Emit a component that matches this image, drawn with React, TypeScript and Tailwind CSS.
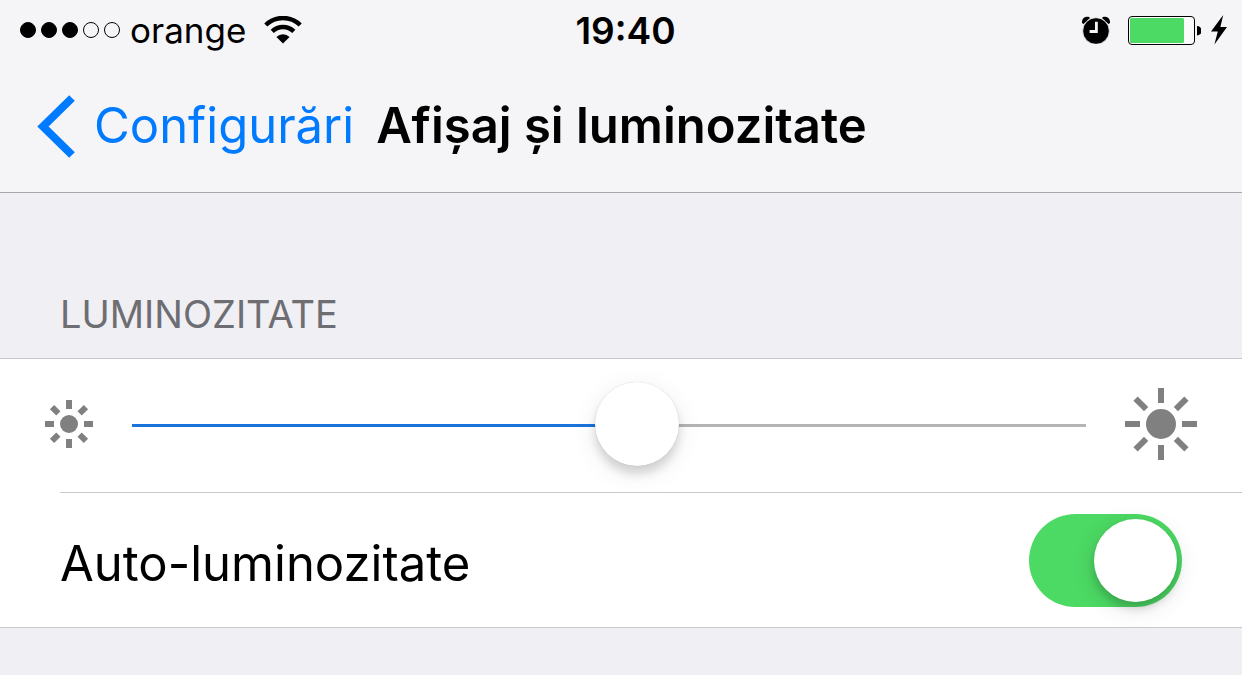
import { useState } from "react";

const rays = [0, 45, 90, 135, 180, 225, 270, 315];

function SignalDots({ strength }: { strength: number }) {
  return (
    <div className="flex gap-[5px]">
      {[0, 1, 2, 3, 4].map((dot) => (
        <span
          key={dot}
          className={
            dot < strength
              ? "size-4 rounded-full border border-black bg-black"
              : "size-4 rounded-full border border-black"
          }
        />
      ))}
    </div>
  );
}

function WifiIcon() {
  return (
    <svg width="38" height="28" viewBox="0 0 38 28" aria-hidden="true">
      <path d="M1.8 9A24.5 24.5 0 0 1 36.2 9" fill="none" stroke="#000" strokeWidth="4.4" />
      <path d="M8.2 15.4A15.4 15.4 0 0 1 29.8 15.4" fill="none" stroke="#000" strokeWidth="4.4" />
      <path d="M19 27.6l-6.6-6.6a9.4 9.4 0 0 1 13.2 0z" />
    </svg>
  );
}

function AlarmIcon() {
  return (
    <svg width="28" height="28" viewBox="0 0 28 28" aria-hidden="true">
      <path d="M0 7C-.4 2.6 2.4 0 7 .9L8 2 1.4 8zM28 7C28.4 2.6 25.6 0 21 .9L20 2l6.6 6z" />
      <circle cx="14" cy="15" r="13.3" stroke="#f5f5f7" strokeWidth=".8" />
      <path d="M14.4 5.7v9.8H7.6" fill="none" stroke="#f5f5f7" strokeWidth="2.8" />
    </svg>
  );
}

function BatteryIcon() {
  return (
    <svg width="73" height="29" viewBox="0 0 73 29" aria-hidden="true">
      <rect x=".5" y=".5" width="66" height="28" rx="3.5" fill="#fbfbfc" stroke="#000" />
      <rect x="2" y="2" width="54" height="25" rx="1.5" fill="#4cd964" />
      <path d="M69 10a4.5 4.5 0 0 1 0 9.5z" />
    </svg>
  );
}

function BoltIcon() {
  return (
    <svg width="16" height="30" viewBox="0 0 16 30" aria-hidden="true">
      <path d="M12.2 0L0 16.4h6.8L3.4 29.6 16 12H9.4z" />
    </svg>
  );
}

function SunIcon({ size, radius, ray }: { size: number; radius: number; ray: number }) {
  const c = size / 2;
  return (
    <svg
      width={size}
      height={size}
      viewBox={`0 0 ${size} ${size}`}
      fill="#808080"
      className="shrink-0"
      aria-hidden="true"
    >
      <circle cx={c} cy={c} r={radius} />
      {rays.map((angle) => (
        <rect
          key={angle}
          x={c - 3}
          y={0}
          width={6}
          height={ray}
          transform={`rotate(${angle} ${c} ${c})`}
        />
      ))}
    </svg>
  );
}

export default function App() {
  const [brightness, setBrightness] = useState(532);
  const [auto, setAuto] = useState(true);

  return (
    <div className="min-h-screen bg-[#efeff4] font-['Inter','Liberation_Sans',sans-serif] text-black">
      <header className="border-b border-[#a7a7ab] bg-[#f5f5f7]">
        <div className="grid h-15 grid-cols-[1fr_auto_1fr] items-center pr-[15px] pl-5">
          <div className="flex items-center">
            <SignalDots strength={3} />
            <span className="ml-2.5 text-[35px] leading-10">orange</span>
            <span className="ml-4.5">
              <WifiIcon />
            </span>
          </div>
          <time className="pt-0.5 pl-1 text-[37px] leading-10 font-semibold">19:40</time>
          <div className="flex items-center justify-end">
            <AlarmIcon />
            <span className="ml-4.5">
              <BatteryIcon />
            </span>
            <span className="ml-2.5">
              <BoltIcon />
            </span>
          </div>
        </div>
        <nav className="flex h-33 items-center gap-[22px] pl-9">
          <button type="button" className="flex items-center gap-4.5 text-[49px] leading-[62px] text-[#007aff]">
            <svg width="40" height="64" viewBox="0 0 40 64" aria-hidden="true">
              <path d="M36 4L7 32.5 36 61" fill="none" stroke="#007aff" strokeWidth="8" />
            </svg>
            Configurări
          </button>
          <h1 className="text-[49px] leading-[62px] font-semibold whitespace-nowrap">
            Afișaj și luminozitate
          </h1>
        </nav>
      </header>

      <main>
        <h2 className="px-15 pt-[99px] pb-[21px] text-[38px] leading-[45px] text-[#6d6d72]">
          LUMINOZITATE
        </h2>
        <section className="border-y border-[#c8c7cc] bg-white">
          <div className="flex h-[133px] items-center px-[45px] pb-1">
            <SunIcon size={48} radius={9} ray={9} />
            <input
              type="range"
              min={0}
              max={1000}
              value={brightness}
              onChange={(e) => setBrightness(Number(e.target.value))}
              aria-label="Luminozitate"
              className="mx-[39px] h-[7px] min-w-0 flex-1 appearance-none bg-[length:100%_3px] bg-bottom bg-no-repeat [&::-webkit-slider-thumb]:size-[84px] [&::-webkit-slider-thumb]:appearance-none [&::-webkit-slider-thumb]:rounded-full [&::-webkit-slider-thumb]:bg-white [&::-webkit-slider-thumb]:shadow-[0_0_1px_rgba(0,0,0,0.2),0_8px_10px_rgba(0,0,0,0.14),0_6px_28px_rgba(0,0,0,0.08)]"
              style={{
                backgroundImage: `linear-gradient(to right, #1a73dc ${brightness / 10}%, #b4b4b4 ${brightness / 10}%)`,
              }}
            />
            <SunIcon size={72} radius={15} ray={15} />
          </div>
          <div className="ml-15 flex h-[135px] items-center justify-between border-t border-[#c8c7cc] pr-15">
            <label htmlFor="auto-brightness" className="pt-2 text-[49px] leading-[62px]">
              Auto-luminozitate
            </label>
            <input
              id="auto-brightness"
              type="checkbox"
              role="switch"
              checked={auto}
              onChange={(e) => setAuto(e.target.checked)}
              className="h-[93px] w-[153px] appearance-none overflow-visible rounded-full bg-[#e5e5ea] p-[5px] before:block before:size-[83px] before:rounded-full before:bg-white before:shadow-[0_6px_8px_rgba(0,0,0,0.16),0_6px_24px_rgba(0,0,0,0.12)] checked:bg-[#4cd964] checked:before:ml-auto"
            />
          </div>
        </section>
      </main>
    </div>
  );
}
